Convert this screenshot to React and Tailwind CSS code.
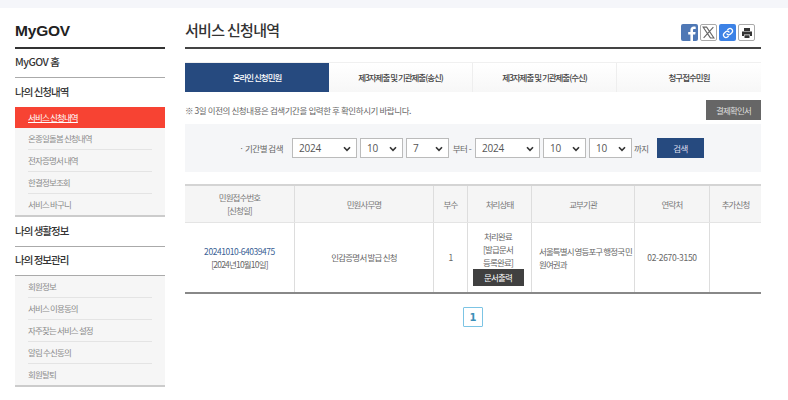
import React from "react";

function Sel({ v, w }) {
  return (
    <div className={`relative h-[20px] ${w} border border-[#bbbbbb] bg-white flex items-center pl-[6px] text-[10px] tracking-[-0.2px] text-[#555] [font-family:'Open_Sans','Noto_Sans_CJK_KR',sans-serif]`}>
      {v}
      <svg className="absolute right-[5px] top-[7px]" width="8" height="6" viewBox="0 0 8 6" fill="none">
        <path d="M1 1.2 4 4.4 7 1.2" stroke="#333" strokeWidth="1.6" />
      </svg>
    </div>
  );
}

function Sub({ items, active }) {
  return (
    <div className="bg-[#f6f6f6] border-b-2 border-[#cccccc]">
      {items.map((t, i) => (
        <div key={t} className={i === active ? "h-[21px] bg-[#f74333] text-white text-[8.5px] tracking-[-0.85px] pl-[13px] flex items-center underline" : "mx-[13px] h-[22px] last:h-[21px] text-[#8c8c8c] text-[8.5px] tracking-[-0.85px] flex items-center border-b border-[#e4e4e4] last:border-b-0"}>
          {t}
        </div>
      ))}
    </div>
  );
}

function Th({ w, children }) {
  return (
    <div className={`${w} shrink-0 flex flex-col items-center justify-center border-r border-[#dddddd] last:border-r-0 text-[8.5px] tracking-[-0.9px] leading-[13px] text-[#777]`}>
      {children}
    </div>
  );
}

function Td({ w, children, className = "" }) {
  return (
    <div className={`${w} shrink-0 flex flex-col items-center justify-center border-r border-[#dddddd] last:border-r-0 text-[8.5px] tracking-[-0.8px] leading-[13px] text-[#666] ${className}`}>
      {children}
    </div>
  );
}

const widths = ["w-[110px]", "w-[139px]", "w-[34px]", "w-[64px]", "w-[103px]", "w-[75px]", "w-[51px]"];

export default function App() {
  return (
    <div className="w-[788px] h-[400px] overflow-hidden bg-white [font-family:'Noto_Sans_CJK_KR','Noto_Sans',sans-serif]">
      <div className="h-[8px] bg-[#f5f6fa]" />
      <div className="flex pl-[15px] pr-[27px]">
        {/* Sidebar */}
        <aside className="w-[150px] shrink-0">
          <div className="h-[41px] pt-[12px] border-b-2 border-[#333] text-[15.5px] leading-[22px] font-bold text-[#222] [font-family:'Liberation_Sans',sans-serif] tracking-[-0.2px]">MyGOV</div>
          <div className="h-[29px] pb-[2px] flex items-center border-b border-[#aaaaaa] text-[10.5px] tracking-[-0.5px] font-medium text-[#333]">MyGOV 홈</div>
          <div className="h-[29px] pb-[2px] flex items-center text-[10.5px] tracking-[-1px] font-medium text-[#333]">나의 신청내역</div>
          <Sub active={0} items={["서비스 신청내역", "온종일돌봄 신청내역", "전자증명서 내역", "한결정보조회", "서비스 바구니"]} />
          <div className="h-[30px] pb-[2px] flex items-center border-b border-[#aaaaaa] text-[10.5px] tracking-[-1px] font-medium text-[#333]">나의 생활정보</div>
          <div className="h-[29px] pb-[2px] flex items-center border-b border-[#aaaaaa] text-[10.5px] tracking-[-1px] font-medium text-[#333]">나의 정보관리</div>
          <Sub active={-1} items={["회원정보", "서비스 이용동의", "자주찾는 서비스 설정", "알림 수신동의", "회원탈퇴"]} />
        </aside>

        {/* Main */}
        <main className="ml-[20px] w-[576px] shrink-0">
          <div className="h-[41px] pt-[11px] border-b-2 border-[#444] flex justify-between">
            <div className="text-[15px] leading-[22px] tracking-[-0.7px] font-medium text-[#333]">서비스 신청내역</div>
            <div className="flex gap-[2px] h-[17px] mt-[5px] mr-[6px]">
              <div className="w-[17px] h-[17px] rounded-[2px] bg-[#4f78b5] flex items-end justify-end pr-[1px] overflow-hidden">
                <svg width="11" height="16" viewBox="0 0 11 16"><path d="M7 16V9.5h2.2l.4-2.6H7V5.4c0-.8.3-1.3 1.3-1.3h1.4V1.8C9.4 1.7 8.6 1.6 7.8 1.6 5.8 1.6 4.4 2.8 4.4 5v1.9H2.2v2.6h2.2V16z" fill="#fff" /></svg>
              </div>
              <div className="w-[17px] h-[17px] rounded-[2px] border border-[#aaa] bg-white flex items-center justify-center">
                <svg width="13" height="13" viewBox="0 0 24 24"><path d="M2 2h6.5l13.5 20h-6.5zM21 2 3 22" stroke="#666" strokeWidth="2" fill="none" /></svg>
              </div>
              <div className="w-[17px] h-[17px] rounded-[2px] bg-[#3c82e6] flex items-center justify-center">
                <svg width="12" height="12" viewBox="0 0 24 24" fill="none" stroke="#fff" strokeWidth="2.6" strokeLinecap="round"><path d="M10 14a5 5 0 0 0 7 0l3-3a5 5 0 0 0-7-7l-1.5 1.5" /><path d="M14 10a5 5 0 0 0-7 0l-3 3a5 5 0 0 0 7 7l1.5-1.5" /></svg>
              </div>
              <div className="w-[17px] h-[17px] rounded-[2px] border border-[#aaa] bg-white flex items-center justify-center">
                <svg width="12" height="12" viewBox="0 0 24 24" fill="#333"><path d="M6 2h12v6H6z" /><path d="M2 9h20v9h-4v-3H6v3H2z" /><path d="M7 16.5h10V22H7z" /></svg>
              </div>
            </div>
          </div>

          {/* Tabs */}
          <div className="mt-[13px] h-[30px] flex border-t border-[#f0f0f0] bg-gradient-to-b from-white to-[#f7f7f7] text-[8.5px] tracking-[-1px] font-medium text-[#444]">
            <div className="w-[144px] flex items-center justify-center bg-[#264a7f] text-white">온라인 신청민원</div>
            <div className="w-[144px] flex items-center justify-center border-r border-[#eeeeee]">제3자제출 및 기관제출(송신)</div>
            <div className="w-[144px] flex items-center justify-center border-r border-[#eeeeee]">제3자제출 및 기관제출(수신)</div>
            <div className="w-[144px] flex items-center justify-center">청구접수민원</div>
          </div>

          {/* Notice */}
          <div className="mt-[8px] h-[21px] flex items-center justify-between text-[8.5px] tracking-[-0.42px] text-[#666]">
            <span>※ 3일 이전의 신청내용은 검색기간을 입력한 후 확인하시기 바랍니다.</span>
            <div className="w-[55px] h-[20px] self-start bg-[#666] text-[#ddd] tracking-[-0.8px] flex items-center justify-center">결제확인서</div>
          </div>

          {/* Filter */}
          <div className="mt-[3px] h-[48px] bg-[#f5f6f8] flex items-center text-[8.5px] tracking-[-0.5px] text-[#666]">
            <span className="w-[107px] pr-[9px] text-right">· 기간별 검색</span>
            <Sel v="2024" w="w-[65px]" />
            <div className="w-[3px]" />
            <Sel v="10" w="w-[43px]" />
            <div className="w-[3px]" />
            <Sel v="7" w="w-[43px]" />
            <span className="w-[26px] text-center">부터 -</span>
            <Sel v="2024" w="w-[65px]" />
            <div className="w-[3px]" />
            <Sel v="10" w="w-[43px]" />
            <div className="w-[3px]" />
            <Sel v="10" w="w-[43px]" />
            <span className="w-[25px] pl-[2px]">까지</span>
            <div className="w-[47px] h-[20px] bg-[#264a7f] text-[#dde] flex items-center justify-center">검색</div>
          </div>

          {/* Table */}
          <div className="mt-[12px] border-t-2 border-[#d4d4d4] border-b-2 border-b-[#888888]">
            <div className="h-[37px] flex bg-[#f5f5f5] border-b border-[#e4e4e4]">
              <Th w={widths[0]}><span>민원접수번호</span><span>[신청일]</span></Th>
              <Th w={widths[1]}>민원사무명</Th>
              <Th w={widths[2]}>부수</Th>
              <Th w={widths[3]}>처리상태</Th>
              <Th w={widths[4]}>교부기관</Th>
              <Th w={widths[5]}>연락처</Th>
              <Th w={widths[6]}>추가신청</Th>
            </div>
            <div className="h-[69px] flex">
              <Td w={widths[0]}><span className="text-[#3a5f95] tracking-[-0.45px]">20241010-64039475</span><span>[2024년10월10일]</span></Td>
              <Td w={widths[1]}>인감증명서 발급 신청</Td>
              <Td w={widths[2]}>1</Td>
              <Td w={widths[3]} className="pr-[3px]">
                <span>처리완료</span>
                <span>[발급문서</span>
                <span>등록완료]</span>
                <div className="w-[51px] h-[17px] bg-[#404040] text-white flex items-center justify-center">문서출력</div>
              </Td>
              <Td w={widths[4]} className="!items-start pl-[7px] pr-[1px] !tracking-[-0.9px] break-all">서울특별시 영등포구 행정국 민원여권과</Td>
              <Td w={widths[5]} className="!tracking-[-0.3px]">02-2670-3150</Td>
              <Td w={widths[6]}></Td>
            </div>
          </div>

          {/* Pagination */}
          <div className="mt-[13px] flex justify-center">
            <div className="w-[20px] h-[20px] border border-[#7cc4e4] rounded-[1px] flex items-center justify-center text-[10px] font-bold text-[#3d8fb8] [font-family:'DejaVu_Sans',sans-serif]">1</div>
          </div>
        </main>
      </div>
    </div>
  );
}
